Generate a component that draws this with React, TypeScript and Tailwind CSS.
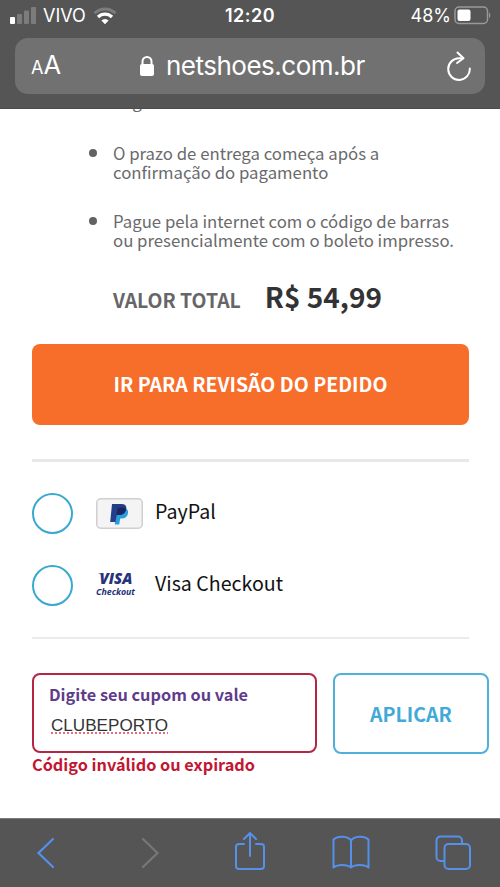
import type { ReactNode } from "react";

const notes = [
  ["O prazo de entrega começa após a", "confirmação do pagamento"],
  ["Pague pela internet com o código de barras", "ou presencialmente com o boleto impresso."],
];

const PayPalLogo = () => (
  <svg width="47" height="31" viewBox="0 0 47 31" className="shrink-0">
    <rect x="0.75" y="0.75" width="45.5" height="29.5" rx="4" fill="#f4f4f5" stroke="#cfcfd1" strokeWidth="1.5" />
    <path d="M20.500 10h8c3 .8 4 3 3.500 5.600-.7 3.300-3 5-6.200 5h-1.600l-1 6h-4.400z" fill="#2a9ddb" />
    <path d="M16 6h9.500c4 0 5.400 2.200 4.600 5.700-.8 3.600-3.300 5.200-6.800 5.200h-2.600l-1.200 7H14.200z" fill="#243f88" />
    <path d="M21.600 10.200c2-.9 6-.9 8.500.6-.6 3.900-3.300 6.100-6.900 6.100h-2.600z" fill="#1c2463" />
  </svg>
);

const VisaLogo = () => (
  <svg width="47" height="31" viewBox="0 0 47 31" className="shrink-0 overflow-visible">
    <g fill="#26337b" fontFamily="Open Sans, Noto Sans, sans-serif" fontStyle="italic" fontWeight="800">
      <text x="3.500" y="14.300" fontSize="15" textLength="33" lengthAdjust="spacingAndGlyphs">
        VISA
      </text>
      <text x="0" y="24.500" fontSize="8.800" fontWeight="700" textLength="39" lengthAdjust="spacingAndGlyphs">
        Checkout
      </text>
    </g>
    <path d="M2 3.500h5v1.800z" fill="#26337b" />
  </svg>
);

const methods: { label: string; logo: ReactNode }[] = [
  { label: "PayPal", logo: <PayPalLogo /> },
  { label: "Visa Checkout", logo: <VisaLogo /> },
];

const StatusBar = () => (
  <div className="grid h-[38px] grid-cols-3 items-start px-[10px] pt-[6px] text-white">
    <div className="flex items-center">
      <svg width="27" height="20" viewBox="0 0 27 20">
        <rect x="0" y="11" width="5" height="7" rx="1" fill="#fff" />
        <rect x="7" y="8" width="5" height="10" rx="1" fill="#7c7c7c" />
        <rect x="14" y="4.500" width="5" height="13.500" rx="1" fill="#7c7c7c" />
        <rect x="21" y="1" width="5" height="17" rx="1" fill="#7c7c7c" />
      </svg>
      <span className="ml-[6px] text-[18px] leading-5">VIVO</span>
      <svg width="24" height="20" viewBox="0 0 24 20" fill="none" className="ml-[7px]">
        <path d="M1.500 7.200a15 15 0 0 1 21 0" stroke="#7c7c7c" strokeWidth="3" />
        <path d="M5 11a9.900 9.900 0 0 1 14 0" stroke="#fff" strokeWidth="3.200" />
        <path d="M8.400 14.600a5 5 0 0 1 7.200 0L12 18.200z" fill="#fff" />
      </svg>
    </div>
    <div className="text-center text-[18px] leading-5 font-semibold tracking-[0.5px]">12:20</div>
    <div className="flex items-center justify-end">
      <span className="text-[18px] leading-5">48%</span>
      <svg width="37" height="20" viewBox="0 0 37 20" className="ml-[3px] -mr-px">
        <rect x="1" y="1" width="32.500" height="16.500" rx="4" fill="none" stroke="#999" strokeWidth="1.500" />
        <rect x="3.500" y="3.500" width="13" height="11.500" rx="2" fill="#fff" />
        <path d="M35 6.500c1.800 1 1.800 4.500 0 5.500z" fill="#999" />
      </svg>
    </div>
  </div>
);

const AddressBar = () => (
  <div className="mx-[15px] flex h-[56px] items-center rounded-[13px] bg-[#717171] pr-[13px] pl-[16px] text-white">
    <div className="flex w-[106px] items-baseline leading-8">
      <span className="text-[18px]">A</span>
      <span className="text-[25.500px]">A</span>
    </div>
    <svg width="16" height="22" viewBox="0 0 16 22" className="ml-[2px]">
      <path d="M3.500 10V6.500a4.500 4.500 0 0 1 9 0V10" fill="none" stroke="#fff" strokeWidth="2" />
      <rect x="1" y="9" width="14" height="12" rx="2" fill="#fff" />
    </svg>
    <span className="ml-[11px] text-[26px] leading-8 tracking-[-0.5px]">netshoes.com.br</span>
    <svg
      width="26"
      height="30"
      viewBox="0 0 26 30"
      fill="none"
      stroke="#fff"
      strokeWidth="2"
      strokeLinecap="round"
      strokeLinejoin="round"
      className="ml-auto"
    >
      <path d="M17 7.300H13A10.800 10.800 0 1 0 23.800 17.500" />
      <path d="M11.500 1.500l6 5.800-6.500 4.700" />
    </svg>
  </div>
);

const Toolbar = () => (
  <div className="flex h-[69px] shrink-0 items-start border-t border-[#7b7b7b] bg-[#555555] pt-[11px] pl-[29px]">
    <svg width="34" height="44" viewBox="0 0 34 44" fill="none" stroke="#5590ea" strokeWidth="2.200" strokeLinecap="round">
      <path d="M24 9L9.500 23 24 37" />
    </svg>
    <svg width="34" height="44" viewBox="0 0 34 44" fill="none" stroke="#777" strokeWidth="2.200" strokeLinecap="round" className="ml-[70px]">
      <path d="M10 9l14.500 14L10 37" />
    </svg>
    <svg width="34" height="44" viewBox="0 0 34 44" fill="none" stroke="#5590ea" strokeWidth="2" strokeLinecap="round" strokeLinejoin="round" className="ml-[66px]">
      <path d="M11 14H6a3 3 0 0 0-3 3v19a3 3 0 0 0 3 3h22a3 3 0 0 0 3-3V17a3 3 0 0 0-3-3h-5" />
      <path d="M17 26V4M11 9l6-6 6 6" />
    </svg>
    <svg width="38" height="44" viewBox="0 0 38 44" fill="none" stroke="#5590ea" strokeWidth="2" strokeLinejoin="round" className="ml-[65px]">
      <path d="M19 10.500C16 6 6 5.500 1.500 9.500v28c4-3.500 13.500-3.500 17.500 0 4-3.500 13.500-3.500 17.500 0v-28C32 5.500 22 6 19 10.500zv27" />
    </svg>
    <svg width="36" height="44" viewBox="0 0 36 44" fill="none" stroke="#5590ea" strokeWidth="2" className="ml-[65px]">
      <path d="M9.500 31H5.500a4 4 0 0 1-4-4V10.500a4 4 0 0 1 4-4H23a4 4 0 0 1 4 4V14" />
      <rect x="9.500" y="14" width="25.500" height="25" rx="4" />
    </svg>
  </div>
);

export default function App() {
  return (
    <div className="flex h-[887px] w-[500px] flex-col overflow-hidden bg-white font-['Noto_Sans_CJK_JP',sans-serif]">
      <header className="h-[109px] shrink-0 border-b border-[#4c4c4c] bg-[#555555] font-[Inter,sans-serif]">
        <StatusBar />
        <AddressBar />
      </header>

      <main className="flex h-[709px] flex-col px-[32px]">
        <div className="flex h-[10px] shrink-0 items-start overflow-hidden pl-[81px] text-[16.750px] leading-[19px] text-[#6a6a6c]">
          <span className="-mt-[17px]">Pagamento com boleto bancário</span>
        </div>
        <ul className="mt-[25px] flex flex-col gap-[31px] pl-[57px] text-[16.750px] leading-[18.700px] text-[#6a6a6c]">
          {notes.map((note) => (
            <li key={note[0]} className="flex">
              <span className="mt-[5px] mr-[16px] size-2 shrink-0 rounded-full bg-[#626264]" />
              <span className="whitespace-nowrap">
                {note[0]}
                <br />
                {note[1]}
              </span>
            </li>
          ))}
        </ul>

        <div className="mt-[28px] flex h-[36px] items-baseline pl-[81px] font-bold whitespace-nowrap">
          <span className="text-[19.400px] leading-9 text-[#666668]">VALOR TOTAL</span>
          <span className="ml-[24px] text-[28px] leading-9 text-[#333335]">R$ 54,99</span>
        </div>

        <button className="mt-[30px] h-[81px] w-[437px] shrink-0 rounded-[8px] bg-[#f76d2a] pb-[2px] text-[19.500px] font-bold text-white">
          IR PARA REVISÃO DO PEDIDO
        </button>

        <hr className="mt-[34px] w-[437px] shrink-0 border-t-[3px] border-[#e8e8e8]" />

        <div className="mt-[31px] flex flex-col gap-[31px]">
          {methods.map(({ label, logo }) => (
            <label key={label} className="flex h-[41px] items-center text-[19.600px] text-[#111]">
              <span className="size-[41px] shrink-0 rounded-full border-2 border-[#38a9cf]" />
              <span className="ml-[23px]">{logo}</span>
              <span className="-mt-[6px] ml-[12px]">{label}</span>
            </label>
          ))}
        </div>

        <hr className="mt-[31px] w-[437px] shrink-0 border-t-2 border-[#ebebeb]" />

        <div className="mt-[34px] flex w-[457px] gap-[16px]">
          <div className="h-[80px] w-[285px] rounded-[8px] border-2 border-[#b52645] pt-[7px] pl-[15px]">
            <div className="text-[16.300px] leading-6 font-bold text-[#5f3c8b]">Digite seu cupom ou vale</div>
            <div className="mt-[9px] ml-[2px] font-['Liberation_Sans',sans-serif] text-[17.100px] leading-[22px] text-[#333] underline decoration-[#e0707a] decoration-dotted decoration-2 underline-offset-[2px]">
              CLUBEPORTO
            </div>
          </div>
          <button className="h-[81px] w-[156px] rounded-[8px] border-2 border-[#4fb0da] text-[19.500px] font-bold text-[#42a9d8]">
            APLICAR
          </button>
        </div>
        <p className="-mt-[2px] text-[16.300px] leading-6 font-bold text-[#c21633]">Código inválido ou expirado</p>
      </main>

      <Toolbar />
    </div>
  );
}
